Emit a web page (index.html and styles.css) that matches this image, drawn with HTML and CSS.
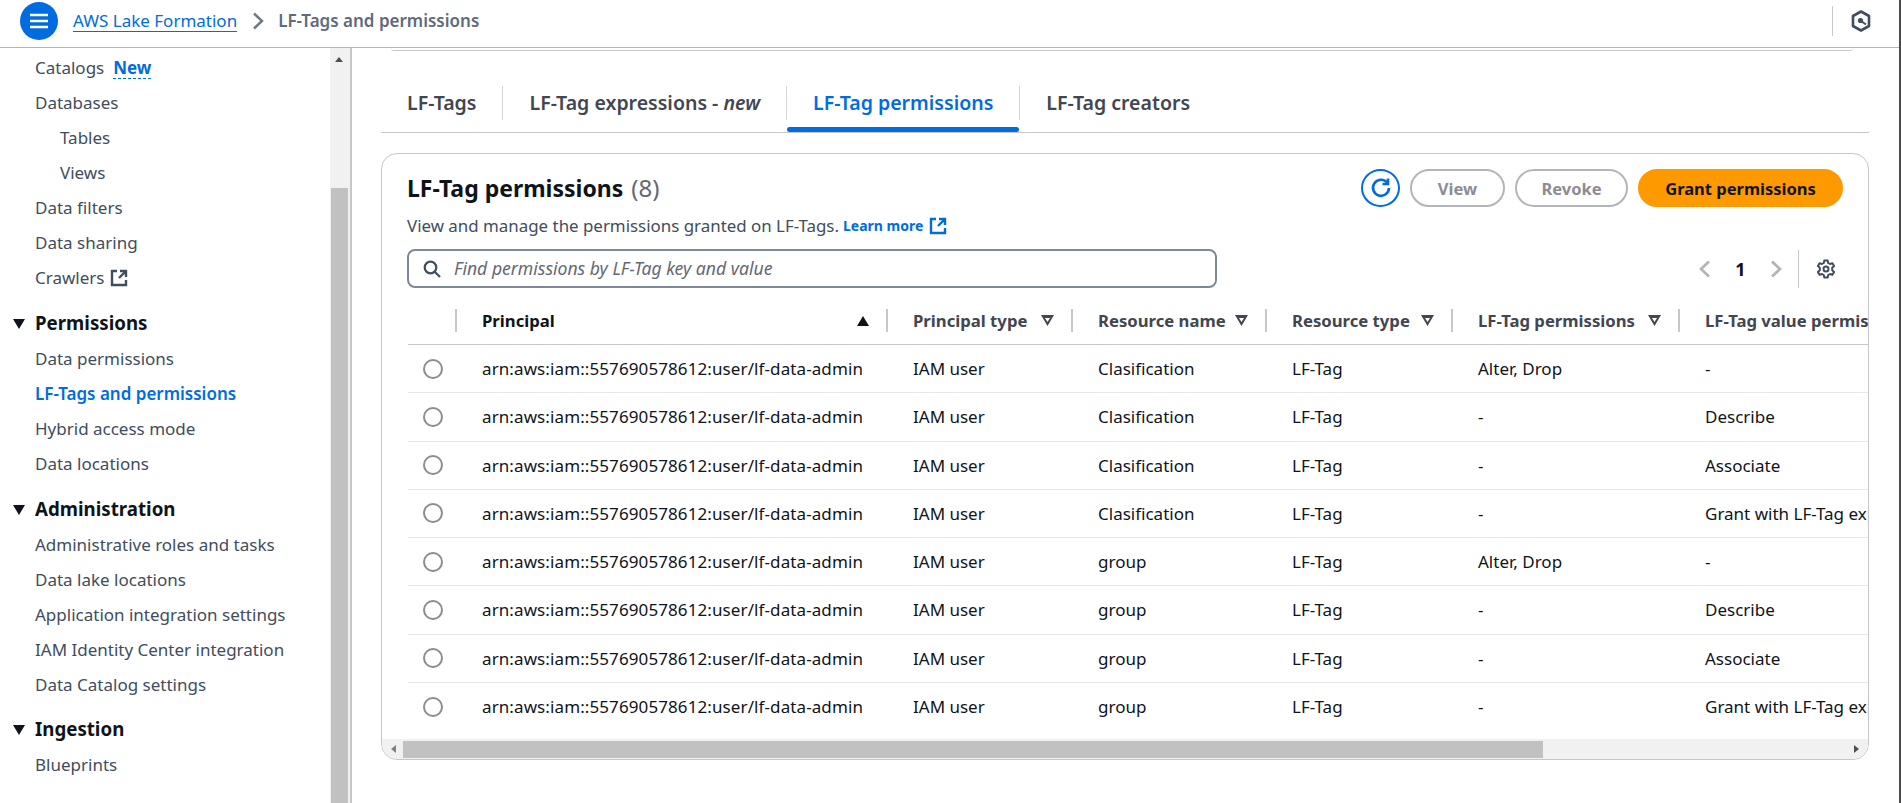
FILE: index.html
```html
<!DOCTYPE html>
<html lang="en">

<head>
  <meta charset="UTF-8">
  <title>LF-Tags and permissions</title>
  <link rel="stylesheet" href="styles.css">
</head>

<body>
  <header class="topbar">
    <button class="menu-btn" aria-label="Menu">
      <svg width="20" height="18" viewBox="0 0 20 18"><path d="M1 3h18M1 9h18M1 15h18" stroke="#fff" stroke-width="2.600" fill="none" /></svg>
    </button>
    <a class="crumb-link">AWS Lake Formation</a>
    <svg class="crumb-sep" width="12" height="18" viewBox="0 0 12 18"><path d="M2 1.500 10 9l-8 7.500" stroke="#6f7782" stroke-width="2.400" fill="none" /></svg>
    <span class="crumb-current">LF-Tags and permissions</span>
    <div class="topbar-right">
      <svg width="20" height="22" viewBox="0 0 20 22"><path d="M10 1.500 18 6v10l-8 4.500L2 16V6z" stroke="#414d5c" stroke-width="2.600" fill="none" stroke-linejoin="round" /><circle cx="9.500" cy="10.500" r="2.600" fill="#414d5c" /><path d="m10 11 5 3.500" stroke="#414d5c" stroke-width="2" /></svg>
    </div>
  </header>

  <div class="layout">
    <aside class="sidebar">
      <nav class="nav">
        <ul class="nav-list">
          <li><a>Catalogs</a> <b class="new-tag">New</b></li>
          <li><a>Databases</a></li>
          <li class="sub"><a>Tables</a></li>
          <li class="sub"><a>Views</a></li>
          <li><a>Data filters</a></li>
          <li><a>Data sharing</a></li>
          <li class="tight"><a>Crawlers</a>
            <svg class="ext" width="18" height="18" viewBox="0 0 18 18"><path d="M7 2H2v14h14v-5M10 2h6v6M16 2 9 9" stroke="currentColor" stroke-width="2.400" fill="none" /></svg>
          </li>
        </ul>
        <h3 class="nav-head">Permissions</h3>
        <ul class="nav-list">
          <li><a>Data permissions</a></li>
          <li class="active"><a>LF-Tags and permissions</a></li>
          <li><a>Hybrid access mode</a></li>
          <li><a>Data locations</a></li>
        </ul>
        <h3 class="nav-head">Administration</h3>
        <ul class="nav-list">
          <li><a>Administrative roles and tasks</a></li>
          <li><a>Data lake locations</a></li>
          <li><a>Application integration settings</a></li>
          <li><a>IAM Identity Center integration</a></li>
          <li><a>Data Catalog settings</a></li>
        </ul>
        <h3 class="nav-head">Ingestion</h3>
        <ul class="nav-list">
          <li><a>Blueprints</a></li>
        </ul>
      </nav>
      <div class="vscroll">
        <span class="vscroll-up"></span>
        <span class="vscroll-thumb"></span>
      </div>
    </aside>

    <main class="content">
      <div class="prev-card"></div>

      <div class="tabs">
        <a class="tab">LF-Tags</a>
        <a class="tab">LF-Tag expressions - <em>new</em></a>
        <a class="tab tab-active">LF-Tag permissions</a>
        <a class="tab">LF-Tag creators</a>
      </div>

      <section class="card">
        <div class="card-head">
          <div>
            <h2 class="card-title">LF-Tag permissions <span class="count">(8)</span></h2>
            <p class="card-desc">View and manage the permissions granted on LF-Tags. <a class="learn">Learn more</a>
              <svg class="ext" width="18" height="18" viewBox="0 0 18 18"><path d="M7 2H2v14h14v-5M10 2h6v6M16 2 9 9" stroke="currentColor" stroke-width="2.400" fill="none" /></svg>
            </p>
          </div>
          <div class="actions">
            <button class="btn-icon" aria-label="Refresh">
              <svg width="22" height="22" viewBox="0 0 22 22"><path d="M17 5.500A8 8 0 1 0 19 11" stroke="#006ce0" stroke-width="2.600" fill="none" /><path d="M18 1.500v5.500h-5.500" stroke="#006ce0" stroke-width="2.600" fill="none" /></svg>
            </button>
            <button class="btn btn-view">View</button>
            <button class="btn btn-revoke">Revoke</button>
            <button class="btn btn-primary">Grant permissions</button>
          </div>
        </div>

        <div class="tools">
          <label class="search">
            <svg width="18" height="18" viewBox="0 0 18 18"><circle cx="7.500" cy="7.500" r="5.800" stroke="#414d5c" stroke-width="2.200" fill="none" /><path d="m11.500 11.500 5.500 5.500" stroke="#414d5c" stroke-width="2.200" /></svg>
            <input placeholder="Find permissions by LF-Tag key and value">
          </label>
          <div class="pager">
            <svg width="12" height="18" viewBox="0 0 12 18"><path d="M10 1.500 2 9l8 7.500" stroke="#b4b4bb" stroke-width="2.800" fill="none" /></svg>
            <span class="page-num">1</span>
            <svg width="12" height="18" viewBox="0 0 12 18"><path d="m2 1.500 8 7.500-8 7.500" stroke="#b4b4bb" stroke-width="2.800" fill="none" /></svg>
            <span class="pager-div"></span>
            <svg width="20" height="20" viewBox="0 0 20 20"><path d="M8.300 1.500h3.400l.5 2.500 1.800 1 2.400-.8 1.700 2.900-1.900 1.700v2.400l1.900 1.700-1.700 2.900-2.400-.8-1.800 1-.5 2.500H8.300l-.5-2.500-1.800-1-2.400.8-1.700-2.900 1.900-1.700V8.800L1.900 7.100l1.700-2.900 2.400.8 1.800-1z" stroke="#414d5c" stroke-width="2" fill="none" stroke-linejoin="round" /><circle cx="10" cy="10" r="2.500" stroke="#414d5c" stroke-width="2" fill="none" /></svg>
          </div>
        </div>

        <div class="table-wrap">
          <table class="perm-table">
            <colgroup>
              <col class="c-radio"><col class="c-principal"><col class="c-ptype"><col class="c-rname"><col class="c-rtype"><col class="c-perm"><col class="c-value">
            </colgroup>
            <thead>
              <tr>
                <th></th>
                <th class="th-sorted"><span class="th-in">Principal <i class="sort-up"></i></span></th>
                <th><span class="th-in">Principal type <i class="sort-icon"></i></span></th>
                <th><span class="th-in">Resource name <i class="sort-icon"></i></span></th>
                <th><span class="th-in">Resource type <i class="sort-icon"></i></span></th>
                <th><span class="th-in">LF-Tag permissions <i class="sort-icon"></i></span></th>
                <th><span class="th-in">LF-Tag value permissions <i class="sort-icon"></i></span></th>
              </tr>
            </thead>
            <tbody>
              <tr><td><span class="radio"></span></td><td>arn:aws:iam::557690578612:user/lf-data-admin</td><td>IAM user</td><td>Clasification</td><td>LF-Tag</td><td>Alter, Drop</td><td>-</td></tr>
              <tr><td><span class="radio"></span></td><td>arn:aws:iam::557690578612:user/lf-data-admin</td><td>IAM user</td><td>Clasification</td><td>LF-Tag</td><td>-</td><td>Describe</td></tr>
              <tr><td><span class="radio"></span></td><td>arn:aws:iam::557690578612:user/lf-data-admin</td><td>IAM user</td><td>Clasification</td><td>LF-Tag</td><td>-</td><td>Associate</td></tr>
              <tr><td><span class="radio"></span></td><td>arn:aws:iam::557690578612:user/lf-data-admin</td><td>IAM user</td><td>Clasification</td><td>LF-Tag</td><td>-</td><td>Grant with LF-Tag expression</td></tr>
              <tr><td><span class="radio"></span></td><td>arn:aws:iam::557690578612:user/lf-data-admin</td><td>IAM user</td><td>group</td><td>LF-Tag</td><td>Alter, Drop</td><td>-</td></tr>
              <tr><td><span class="radio"></span></td><td>arn:aws:iam::557690578612:user/lf-data-admin</td><td>IAM user</td><td>group</td><td>LF-Tag</td><td>-</td><td>Describe</td></tr>
              <tr><td><span class="radio"></span></td><td>arn:aws:iam::557690578612:user/lf-data-admin</td><td>IAM user</td><td>group</td><td>LF-Tag</td><td>-</td><td>Associate</td></tr>
              <tr><td><span class="radio"></span></td><td>arn:aws:iam::557690578612:user/lf-data-admin</td><td>IAM user</td><td>group</td><td>LF-Tag</td><td>-</td><td>Grant with LF-Tag expression</td></tr>
            </tbody>
          </table>
        </div>

        <div class="hscroll">
          <span class="hscroll-left"></span>
          <span class="hscroll-thumb"></span>
          <span class="hscroll-right"></span>
        </div>
      </section>
    </main>
  </div>
</body>

</html>
```

FILE: styles.css
```css
* {
  box-sizing: border-box;
}

html,
body {
  height: 100%;
}

body {
  margin: 0;
  overflow: hidden;
  background: #fff;
  color: #0f141a;
  font-family: "Noto Sans", sans-serif;
  font-size: 17px;
  border-right: 2px solid #4a4a4a;
}

h2,
h3,
p,
ul {
  margin: 0;
  padding: 0;
}

ul {
  list-style: none;
}

button {
  font-family: inherit;
}

/* top bar */
.topbar {
  height: 48px;
  border-bottom: 1px solid #b4b4bb;
  display: flex;
  align-items: flex-start;
  padding-left: 20px;
}

.menu-btn {
  width: 38px;
  height: 38px;
  margin-top: 2px;
  padding: 0;
  border: 0;
  border-radius: 50%;
  background: #006ce0;
  display: flex;
  align-items: center;
  justify-content: center;
}

.crumb-link {
  margin-left: 15px;
  height: 32px;
  line-height: 41px;
  color: #006ce0;
  border-bottom: 1px solid #006ce0;
}

.crumb-sep {
  margin: 12px 14px 0 15px;
}

.crumb-current {
  line-height: 42px;
  font-weight: 600;
  color: #5f6b7a;
}

.topbar-right {
  margin: 6px 28px 0 auto;
  height: 30px;
  padding-left: 18px;
  border-left: 1px solid #c6c6cd;
  display: flex;
  align-items: center;
}

/* side navigation */
.layout {
  display: flex;
  height: calc(100vh - 48px);
}

.sidebar {
  width: 352px;
  flex: none;
  display: flex;
  border-right: 2px solid #c6c6cd;
  overflow: hidden;
}

.nav {
  flex: 1;
  padding-top: 2px;
  color: #414d5c;
}

.nav-list li {
  height: 35px;
  line-height: 35px;
  padding-left: 35px;
  display: flex;
  align-items: center;
  gap: 9px;
}

.nav-list .sub {
  padding-left: 60px;
}

.nav-list .tight {
  gap: 6px;
}

.nav-list .active {
  color: #006ce0;
  font-weight: 600;
}

.new-tag {
  color: #006ce0;
  font-weight: 700;
  line-height: 21px;
  border-bottom: 1px dashed #006ce0;
}

.nav-head {
  position: relative;
  height: 45px;
  padding: 9px 0 0 35px;
  line-height: 36px;
  font-size: 18.700px;
  font-weight: 700;
  color: #0f141a;
  margin-top: 1px;
}

.nav-head:last-of-type {
  margin-top: 0;
}

.nav-head::before {
  content: "";
  position: absolute;
  left: 13px;
  top: 23px;
  border: 6px solid transparent;
  border-top: 10px solid #0f141a;
  border-bottom: 0;
}

.vscroll {
  width: 20px;
  flex: none;
  background: #f1f1f1;
  padding: 0 1px;
  position: relative;
}

.vscroll-up {
  position: absolute;
  left: 5px;
  top: 9px;
  border: 4px solid transparent;
  border-top: 0;
  border-bottom: 5px solid #505050;
}

.vscroll-thumb {
  display: block;
  margin-top: 140px;
  height: 620px;
  width: 17px;
  background: #c1c1c1;
}

/* main column */
.content {
  flex: 1;
  min-width: 0;
  padding-right: 30px;
  padding-left: 29px;
}

.prev-card {
  height: 3px;
  margin: 0 16px 0 10px;
  border-bottom: 1px solid #c6c6cd;
  border-radius: 0 0 16px 16px;
}

.tabs {
  display: flex;
  height: 82px;
  padding-top: 35px;
  border-bottom: 1px solid #c6c6cd;
}

.tab {
  position: relative;
  height: 34px;
  padding: 0 26px;
  line-height: 33px;
  font-size: 19.550px;
  font-weight: 600;
  color: #424650;
  border-right: 1px solid #d1d5db;
}

.tab:last-child {
  border-right: 0;
}

.tab-active {
  color: #006ce0;
}

.tab-active::after {
  content: "";
  position: absolute;
  left: 0;
  right: 0;
  bottom: -12px;
  height: 5px;
  border-radius: 3px;
  background: #006ce0;
}

.card {
  margin-top: 20px;
  height: 607px;
  border: 1px solid #c6c6cd;
  border-radius: 16px;
  overflow: hidden;
  display: flex;
  flex-direction: column;
}

.card-head {
  display: flex;
  justify-content: space-between;
  padding: 15px 25px 0 25px;
  height: 95px;
}

.card-title {
  font-size: 23px;
  font-weight: 700;
  line-height: 28px;
  margin-top: 5px;
}

.count {
  font-size: 24px;
  font-weight: 400;
  color: #656871;
  margin-left: 2px;
}

.card-desc {
  margin-top: 14px;
  font-size: 16.900px;
  line-height: 20px;
  color: #414d5c;
  display: flex;
  align-items: center;
  gap: 4px;
}

.learn {
  color: #006ce0;
  font-size: 14px;
  font-weight: 700;
  margin-right: 2px;
}

.ext {
  flex: none;
}

.card-desc .ext {
  color: #006ce0;
}

.actions {
  display: flex;
  gap: 10px;
}

.btn-icon {
  width: 39px;
  height: 38px;
  padding: 0;
  border: 2px solid #006ce0;
  border-radius: 50%;
  background: #fff;
  display: flex;
  align-items: center;
  justify-content: center;
}

.btn {
  height: 38px;
  border: 2px solid #b4b4bb;
  border-radius: 19px;
  background: #fff;
  color: #8c8c94;
  font-size: 16.500px;
  font-weight: 700;
}

.btn-view {
  width: 95px;
}

.btn-revoke {
  width: 113px;
}

.btn-primary {
  width: 205px;
  border-color: #ff9900;
  background: #ff9900;
  color: #0f141a;
}

.tools {
  display: flex;
  justify-content: space-between;
  padding: 0 32px 0 25px;
  height: 39px;
}

.search {
  width: 810px;
  height: 39px;
  border: 2px solid #7d8998;
  border-radius: 8px;
  display: flex;
  align-items: center;
  gap: 13px;
  padding-left: 14px;
}

.search input {
  flex: 1;
  border: 0;
  outline: 0;
  padding: 0 0 2px;
  font: italic 17.600px "Noto Sans", sans-serif;
}

.search input::placeholder {
  color: #656871;
  opacity: 1;
}

.pager {
  display: flex;
  align-items: center;
}

.page-num {
  width: 59px;
  text-align: center;
  font-weight: 700;
  font-size: 18px;
}

.pager-div {
  width: 1px;
  height: 38px;
  background: #c6c6cd;
  margin: 0 17px 0 16px;
}

/* table */
.table-wrap {
  flex: 1;
  overflow: hidden;
  margin-top: 21px;
  padding-left: 26px;
}

.perm-table {
  table-layout: fixed;
  width: 1630px;
  border-collapse: collapse;
}

.c-radio {
  width: 47px;
}

.c-principal {
  width: 431px;
}

.c-ptype {
  width: 185px;
}

.c-rname {
  width: 194px;
}

.c-rtype {
  width: 186px;
}

.c-perm {
  width: 227px;
}

.c-value {
  width: 360px;
}

.perm-table th {
  height: 34px;
  padding: 0 0 12px;
  border-bottom: 1px solid #c6c6cd;
  text-align: left;
  font-size: 16.700px;
  font-weight: 700;
  color: #424650;
}

.th-in {
  display: flex;
  align-items: center;
  justify-content: space-between;
  height: 23px;
  padding: 0 17px 0 25px;
  border-left: 2px solid #c6c6cd;
  white-space: nowrap;
}

.th-sorted .th-in {
  color: #0f141a;
}

.sort-up {
  flex: none;
  border: 6px solid transparent;
  border-top: 0;
  border-bottom: 10px solid #0f141a;
}

.sort-icon {
  flex: none;
  width: 13px;
  height: 11px;
  background: #424650;
  clip-path: polygon(evenodd, 0 0, 13px 0, 6.500px 11px, 0 0, 4px 3px, 9px 3px, 6.500px 7px, 4px 3px);
}

.perm-table td {
  height: 48.250px;
  padding: 0 0 0 27px;
  white-space: nowrap;
  overflow: hidden;
  border-bottom: 1px solid #e8e8ea;
}

.perm-table td:nth-child(2) {
  letter-spacing: .1px;
}

.perm-table tr:last-child td {
  border-bottom: 0;
}

.perm-table td:first-child {
  padding: 0 0 0 15px;
}

.radio {
  display: block;
  width: 20px;
  height: 20px;
  border: 2px solid #8c8c94;
  border-radius: 50%;
}

/* card scrollbar */
.hscroll {
  height: 20px;
  flex: none;
  background: #f1f1f1;
  display: flex;
  align-items: center;
  position: relative;
}

.hscroll-left {
  position: absolute;
  left: 9px;
  border: 4px solid transparent;
  border-left: 0;
  border-right: 5px solid #808080;
}

.hscroll-right {
  position: absolute;
  right: 9px;
  border: 4px solid transparent;
  border-right: 0;
  border-left: 5px solid #505050;
}

.hscroll-thumb {
  margin-left: 21px;
  width: 1140px;
  height: 17px;
  background: #c1c1c1;
}
```
